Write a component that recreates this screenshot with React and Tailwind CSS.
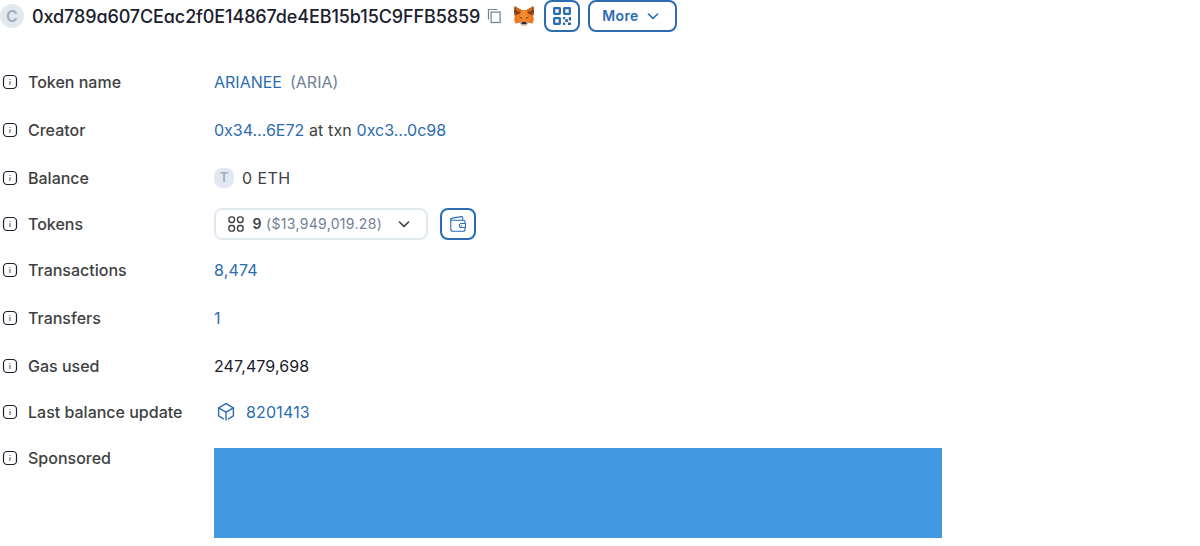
import React from "react";

function InfoIcon() {
  return (
    <svg className="h-5 w-5 shrink-0" viewBox="0 0 20 20" fill="none">
      <rect x="3.5" y="3.5" width="13" height="13" rx="3.6" stroke="#1a202c" strokeWidth="1.2" />
      <path d="M10 9v4M10 7v1.1" stroke="#5a6068" strokeWidth="1.1" />
    </svg>
  );
}

function ChevronDown() {
  return (
    <svg className="h-5 w-5 shrink-0" viewBox="0 0 20 20" fill="none" stroke="currentColor" strokeWidth="1.6" strokeLinecap="round" strokeLinejoin="round">
      <path d="M5.4 8l4.6 4.4L14.6 8" />
    </svg>
  );
}

function CopyIcon() {
  return (
    <svg className="h-5 w-5 shrink-0" viewBox="0 0 20 20" fill="none" stroke="#718096" strokeWidth="1.2">
      <path d="M4.5 13.6V3.5h8.8" />
      <rect x="7.1" y="6.1" width="9" height="10.4" />
    </svg>
  );
}

function FoxIcon() {
  return (
    <svg className="h-5 w-5 shrink-0" viewBox="0 0 20 20">
      <path d="M.6.3L7.4 4h5.2L19.4.3 20 6l-.8 4 .8 3.6-1.4 4-4-.9-2.4 2.5H7.8l-2.4-2.5-4 .9L0 13.6.8 10 0 6z" fill="#ee7c22" />
      <path d="M.6.3L7.4 4 6.2 7.2.8 9.6 0 6zM19.4.3L12.6 4l1.2 3.2 5.4 2.4L20 6z" fill="#85431d" />
      <path d="M.6.3L7.4 4l-.5 2-4.4-1.4zM19.4.3L12.6 4l.5 2 4.4-1.4z" fill="#d96b20" />
      <path d="M7.4 4h5.2l1.8 7.6-2 3.2H7.6l-2-3.2z" fill="#f58a2b" />
      <path d="M5.2 11.3l2.6.2.5 1.6zM14.8 11.3l-2.6.2-.5 1.6z" fill="#24343d" />
      <path d="M5.6 15.5l2.2.6h4.4l2.2-.6-.6 2.3-2 1.6H8.2l-2-1.6z" fill="#bfb0a5" />
      <path d="M8 15.9h4l.5 2.2h-5z" fill="#272a2e" />
    </svg>
  );
}

function QrIcon() {
  return (
    <svg className="h-5 w-5 shrink-0" viewBox="0 0 20 20">
      <g fill="none" stroke="#2b6cb0" strokeWidth="2.3">
        <rect x="2.2" y="2.2" width="5.6" height="5.6" rx=".3" />
        <rect x="12.2" y="2.2" width="5.6" height="5.6" rx=".3" />
        <rect x="2.2" y="12.2" width="5.6" height="5.6" rx=".3" />
      </g>
      <path d="M11 11h2.2v2.2H11zM13.2 13.2h2.8v2.8h-2.8zM16.8 11H19v3.4h-2.2zM11 16.4h2.2V19H11zM16 16.6h3V19h-3z" fill="#2b6cb0" />
    </svg>
  );
}

function TokensIcon() {
  return (
    <svg className="h-5 w-5 shrink-0" viewBox="0 0 20 20" fill="none" stroke="currentColor" strokeWidth="1.4">
      <rect x="2.9" y="2.9" width="5.6" height="5.6" rx="2.4" />
      <rect x="11.5" y="2.9" width="5.6" height="5.6" rx="2.4" />
      <rect x="2.9" y="11.5" width="5.6" height="5.6" rx="2.4" />
      <rect x="11.5" y="11.5" width="5.6" height="5.6" rx="2.4" />
    </svg>
  );
}

function WalletIcon() {
  return (
    <svg className="h-5 w-5 shrink-0" viewBox="0 0 20 20" fill="none" stroke="#2b6cb0" strokeWidth="1.1" strokeLinejoin="round">
      <path d="M17 9V7.7a1.5 1.5 0 0 0-1.5-1.5H4a1.4 1.4 0 0 1-1.2-1.4v10.4a2 2 0 0 0 2 2h10.7A1.5 1.5 0 0 0 17 15.7V14" />
      <path d="M2.8 5.4c0-.8.6-1.2 1.4-1.3l9.3-1.5c.8-.1 1.2.3 1.2 1v2.6" />
      <path d="M17.5 9.5h-4.2a2 2 0 0 0 0 4h4.2z" />
      <path d="M13.2 11.5h.9" />
    </svg>
  );
}

function BlockIcon() {
  return (
    <svg className="h-6 w-6 shrink-0" viewBox="0 0 24 24" fill="none" stroke="#2b6cb0" strokeWidth="1.4" strokeLinejoin="round">
      <path d="M10 19.1l-5.4-3.2V7.8L12 3.6l7.4 4.2v8.1L14 19.1" />
      <path d="M4.6 7.8l7.4 4.3 7.4-4.3M12 12.1v8.3" />
    </svg>
  );
}

function Row({ label, className, children }) {
  return (
    <div className={`flex items-center ${className}`}>
      <div className="flex w-[214px] shrink-0 items-center gap-2 font-medium">
        <InfoIcon />
        <span>{label}</span>
      </div>
      <div className="flex items-center whitespace-pre">{children}</div>
    </div>
  );
}

export default function App() {
  return (
    <main className="h-[546px] w-[1200px] overflow-hidden bg-white font-['Inter',sans-serif] text-base text-[#404041]">
      <header className="flex h-8 items-center">
        <span className="flex h-6 w-6 items-center justify-center rounded-full bg-[#e2e8f0] text-base font-semibold text-[#a0aec0]">C</span>
        <h1 className="ml-2 w-[448px] whitespace-nowrap pt-0.5 text-[18px] font-medium leading-8 tracking-[-0.11px] text-[#1a202c] [font-feature-settings:'cv11']">
          0xd789a607CEac2f0E14867de4EB15b15C9FFB5859
        </h1>
        <button className="ml-1"><CopyIcon /></button>
        <span className="ml-2.5"><FoxIcon /></span>
        <button className="ml-2.5 flex h-8 w-9 items-center justify-center rounded-lg border-2 border-[#2b6cb0]"><QrIcon /></button>
        <button className="ml-2 flex h-8 w-[89px] items-center gap-1 rounded-lg border-2 border-[#2b6cb0] pl-3 text-sm font-semibold text-[#2b6cb0]">
          <span className="w-[37px] tracking-[0.4px]">More</span>
          <ChevronDown />
        </button>
      </header>
      <section className="pt-[26px]">
        <Row label="Token name" className="h-12">
          <a className="text-[#2b6cb0]">ARIANEE</a>
          <span className="ml-2 text-[#718096]">(ARIA)</span>
        </Row>
        <Row label="Creator" className="h-12">
          <a className="text-[#2b6cb0]">0x34...6E72</a><span className="tracking-[0.14px]"> at txn </span><a className="text-[#2b6cb0]">0xc3...0c98</a>
        </Row>
        <Row label="Balance" className="h-12">
          <span className="flex h-5 w-5 items-center justify-center rounded-[8px] bg-[#e2e8f0] text-[13px] font-semibold text-[#a0aec0]">T</span>
          <span className="ml-2 tracking-[0.4px]">0 ETH</span>
        </Row>
        <Row label="Tokens" className="h-11">
          <button className="flex h-8 w-[214px] items-center rounded-lg border-2 border-[#e2e8f0] pl-2.5 text-sm">
            <TokensIcon />
            <span className="ml-1.5 w-2.5 font-semibold">9</span>
            <span className="ml-1 tracking-[0.32px] text-[#718096]">($13,949,019.28)</span>
            <span className="ml-auto pr-3"><ChevronDown /></span>
          </button>
          <button className="ml-3 flex h-8 w-9 items-center justify-center rounded-lg border-2 border-[#2b6cb0]"><WalletIcon /></button>
        </Row>
        <Row label="Transactions" className="h-12"><a className="tracking-[0.15px] text-[#2b6cb0]">8,474</a></Row>
        <Row label="Transfers" className="h-12"><a className="text-[#2b6cb0]">1</a></Row>
        <Row label="Gas used" className="h-12"><span className="tracking-[0.1px] text-[#1a202c]">247,479,698</span></Row>
        <Row label="Last balance update" className="h-11">
          <BlockIcon />
          <a className="ml-2 tracking-[0.17px] text-[#2b6cb0]">8201413</a>
        </Row>
        <div className="flex items-start pt-3">
          <div className="flex w-[214px] shrink-0 items-center gap-2 font-medium"><InfoIcon /><span>Sponsored</span></div>
          <div className="mt-0.5 h-[90px] w-[728px] bg-[#4299e1]" />
        </div>
      </section>
    </main>
  );
}
